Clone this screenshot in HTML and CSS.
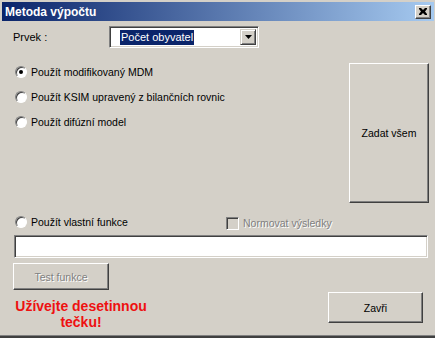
FILE: index.html
```html
<!DOCTYPE html>
<html lang="cs">
<head>
<meta charset="utf-8">
<title>Metoda výpočtu</title>
<link rel="stylesheet" href="styles.css">
</head>
<body>
<div class="window">
  <div class="titlebar">
    <span class="title">Metoda výpočtu</span>
    <span class="close-btn">
      <svg width="8" height="7" viewBox="0 0 8 7"><path d="M0 0h2l2 2 2-2h2v1L6 3.5 8 6v1H6L4 5 2 7H0V6l2-2.5L0 1z" fill="#000"/></svg>
    </span>
  </div>
  <div class="content">
    <div class="row-prvek">
      <span class="label-prvek">Prvek :</span>
      <div class="combo">
        <div class="combo-field"><span class="combo-sel">Počet obyvatel</span></div>
        <span class="combo-btn">
          <svg width="7" height="4" viewBox="0 0 7 4"><path d="M0 0h7L3.5 4z" fill="#000"/></svg>
        </span>
      </div>
    </div>

    <div class="main">
      <div class="radios">
        <div class="radio-row"><span class="radio checked"></span><span>Použít modifikovaný MDM</span></div>
        <div class="radio-row"><span class="radio"></span><span>Použít KSIM upravený z bilančních rovnic</span></div>
        <div class="radio-row"><span class="radio"></span><span>Použít difúzní model</span></div>
      </div>
      <div class="btn btn-zadat">Zadat všem</div>
    </div>

    <div class="row-custom">
      <div class="radio-row"><span class="radio"></span><span>Použít vlastní funkce</span></div>
      <div class="check-row"><span class="checkbox"></span><span class="disabled-text">Normovat výsledky</span></div>
    </div>

    <div class="textbox"></div>

    <div class="btn btn-test"><span class="disabled-text">Test funkce</span></div>

    <div class="bottom-row">
      <div class="warning">Užívejte desetinnou<br>tečku!</div>
      <div class="btn btn-close">Zavři</div>
    </div>
  </div>
</div>
</body>
</html>
```

FILE: styles.css
```css
html, body {
  margin: 0;
  padding: 0;
  background: #d4d0c8;
}

.window {
  width: 435px;
  height: 338px;
  box-sizing: border-box;
  background: #d4d0c8;
  padding: 2px 1px 0 2px;
  border-bottom: 2px solid #404040;
  box-shadow: inset 0 -1px 0 #808080;
  font-family: "Liberation Sans", Arial, sans-serif;
  font-size: 10.5px;
  color: #000;
  overflow: hidden;
}

.titlebar {
  height: 19px;
  display: flex;
  align-items: center;
  justify-content: space-between;
  padding: 0 3px 0 3px;
  background: linear-gradient(to right, #0a246a, #a6caf0);
}

.title {
  color: #fff;
  font-weight: bold;
  font-size: 12px;
}

.close-btn {
  width: 16px;
  height: 14px;
  box-sizing: border-box;
  background: #d4d0c8;
  border: 1px solid;
  border-color: #fff #404040 #404040 #fff;
  box-shadow: inset -1px -1px 0 #808080;
  display: flex;
  align-items: center;
  justify-content: center;
}

.content {
  padding: 5px 5px 0 11px;
}

.row-prvek {
  display: flex;
  align-items: center;
  height: 22px;
}

.label-prvek {
  width: 96px;
  font-size: 11px;
}

.combo {
  width: 150px;
  height: 22px;
  box-sizing: border-box;
  border: 1px solid;
  border-color: #808080 #fff #fff #808080;
  box-shadow: inset 1px 1px 0 #404040, inset -1px -1px 0 #d4d0c8;
  background: #fff;
  display: flex;
  align-items: center;
  padding: 2px 2px 2px 10px;
}

.combo-field {
  flex: 1;
  display: flex;
  align-items: center;
}

.combo-sel {
  background: #0a246a;
  color: #fff;
  font-size: 11px;
  line-height: 15px;
  padding: 0 1px;
}

.combo-btn {
  width: 16px;
  height: 16px;
  box-sizing: border-box;
  background: #d4d0c8;
  border: 1px solid;
  border-color: #d4d0c8 #404040 #404040 #d4d0c8;
  box-shadow: inset 1px 1px 0 #fff, inset -1px -1px 0 #808080;
  display: flex;
  align-items: center;
  justify-content: center;
}

.main {
  margin-top: 15px;
  display: flex;
  justify-content: space-between;
}

.radios {
  padding-top: 1px;
  display: flex;
  flex-direction: column;
  gap: 9px;
}

.radio-row {
  display: flex;
  align-items: center;
  height: 16px;
  gap: 4px;
  padding-left: 2px;
}

.radio {
  width: 12px;
  height: 12px;
  box-sizing: border-box;
  border-radius: 50%;
  background: #fff;
  border: 1px solid;
  border-color: #808080 #fff #fff #808080;
  box-shadow: inset 1px 1px 0 #404040;
  display: flex;
  align-items: center;
  justify-content: center;
  flex: none;
}

.radio.checked::after {
  content: "";
  width: 4px;
  height: 4px;
  border-radius: 50%;
  background: #000;
}

.btn {
  box-sizing: border-box;
  background: #d4d0c8;
  border: 1px solid;
  border-color: #fff #404040 #404040 #fff;
  box-shadow: inset -1px -1px 0 #808080;
  display: flex;
  align-items: center;
  justify-content: center;
}

.btn-zadat {
  width: 80px;
  height: 140px;
}

.row-custom {
  margin-top: 11px;
  display: grid;
  grid-template-columns: 213px auto;
  align-items: center;
  height: 16px;
}

.check-row {
  display: flex;
  align-items: center;
  gap: 4px;
  padding-top: 2px;
}

.checkbox {
  width: 13px;
  height: 13px;
  box-sizing: border-box;
  border: 1px solid;
  border-color: #808080 #fff #fff #808080;
  box-shadow: inset 1px 1px 0 #404040, inset -1px -1px 0 #d4d0c8;
  background: #d4d0c8;
}

.disabled-text {
  color: #808080;
  text-shadow: 1px 1px 0 #fff;
}

.textbox {
  margin: 5px 0 0 1px;
  width: 414px;
  height: 23px;
  box-sizing: border-box;
  background: #fff;
  border: 1px solid;
  border-color: #808080 #fff #fff #808080;
  box-shadow: inset 1px 1px 0 #404040, inset -1px -1px 0 #d4d0c8;
}

.btn-test {
  margin-top: 5px;
  width: 96px;
  height: 27px;
}

.bottom-row {
  margin-top: 2px;
  display: flex;
  justify-content: space-between;
  padding-right: 6px;
}

.warning {
  width: 136px;
  margin-top: 6px;
  text-align: center;
  color: #ee1111;
  font-weight: bold;
  font-size: 14px;
  line-height: 16px;
}

.btn-close {
  width: 95px;
  height: 31px;
}
```
